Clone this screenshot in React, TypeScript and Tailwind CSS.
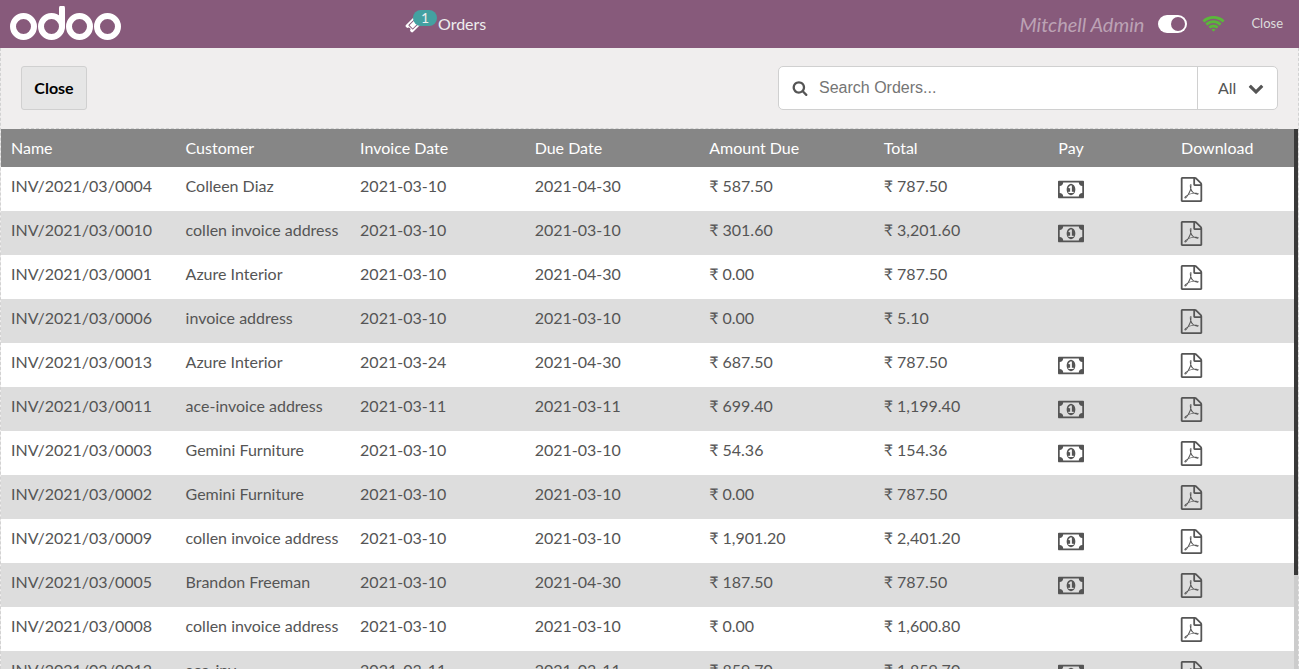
import React from "react";

type Invoice = {
  name: string;
  customer: string;
  date: string;
  due: string;
  amountDue: string;
  total: string;
  payable: boolean;
};

const inv = (
  name: string,
  customer: string,
  date: string,
  due: string,
  amountDue: string,
  total: string,
  payable: boolean,
): Invoice => ({ name, customer, date, due, amountDue, total, payable });

const invoices: Invoice[] = [
  inv("INV/2021/03/0004", "Colleen Diaz", "2021-03-10", "2021-04-30", "587.50", "787.50", true),
  inv("INV/2021/03/0010", "collen invoice address", "2021-03-10", "2021-03-10", "301.60", "3,201.60", true),
  inv("INV/2021/03/0001", "Azure Interior", "2021-03-10", "2021-04-30", "0.00", "787.50", false),
  inv("INV/2021/03/0006", "invoice address", "2021-03-10", "2021-03-10", "0.00", "5.10", false),
  inv("INV/2021/03/0013", "Azure Interior", "2021-03-24", "2021-04-30", "687.50", "787.50", true),
  inv("INV/2021/03/0011", "ace-invoice address", "2021-03-11", "2021-03-11", "699.40", "1,199.40", true),
  inv("INV/2021/03/0003", "Gemini Furniture", "2021-03-10", "2021-03-10", "54.36", "154.36", true),
  inv("INV/2021/03/0002", "Gemini Furniture", "2021-03-10", "2021-03-10", "0.00", "787.50", false),
  inv("INV/2021/03/0009", "collen invoice address", "2021-03-10", "2021-03-10", "1,901.20", "2,401.20", true),
  inv("INV/2021/03/0005", "Brandon Freeman", "2021-03-10", "2021-04-30", "187.50", "787.50", true),
  inv("INV/2021/03/0008", "collen invoice address", "2021-03-10", "2021-03-10", "0.00", "1,600.80", false),
  inv("INV/2021/03/0012", "ace-inv", "2021-03-11", "2021-03-11", "859.70", "1,859.70", true),
];

const glyphs = {
  money:
    "M768 1152h384v-96h-128v-448h-114l-148 137 77 80q42-37 55-57h2v288h-128v96zm512-256q0 70-21 142t-59.5 134-101.5 101-138 39-138-39-101.5-101-59.5-134-21-142 21-142 59.5-134 101.5-101 138-39 138 39 101.5 101 59.5 134 21 142zm512 256v-512q-106 0-181-75t-75-181h-1152q0 106-75 181t-181 75v512q106 0 181 75t75 181h1152q0-106 75-181t181-75zm128-832v1152q0 26-19 45t-45 19h-1792q-26 0-45-19t-19-45v-1152q0-26 19-45t45-19h1792q26 0 45 19t19 45z",
  pdf: "M1596 380q28 28 48 76t20 88v1152q0 40-28 68t-68 28h-1344q-40 0-68-28t-28-68v-1600q0-40 28-68t68-28h896q40 0 88 20t76 48zm-444-244v376h376q-10-29-22-41l-313-313q-12-12-41-22zm384 1528v-1024h-416q-40 0-68-28t-28-68v-416h-768v1536h1280zm-514-593q33 26 84 56 59-7 117-7 147 0 177 49 16 22 2 52 0 1-1 2l-2 2v1q-6 38-71 38-48 0-115-20t-130-53q-221 24-392 83-153 262-242 262-15 0-28-7l-24-12q-1-1-6-5-10-10-6-36 9-40 56-91.5t132-96.5q14-9 23 6 2 2 2 4 52-85 107-197 68-136 104-262-24-82-30.5-159.5t6.5-127.5q11-40 42-40h22q23 0 35 15 18 21 9 68-2 6-4 8 1 3 1 8v30q-2 123-14 192 55 164 146 238zm-576 411q52-24 137-158-51 40-87.5 84t-49.5 74zm398-920q-15 42-2 132 1-7 7-44 0-3 7-43 1-4 4-8-1-1-1-2-1-2-1-3-1-22-13-36 0 1-1 2v2zm-124 661q135-54 284-81-2-1-13-9.5t-16-13.5q-76-67-127-176-27 86-83 197-30 56-45 83zm646-16q-24-24-140-24 76 28 124 28 14 0 18-1 0-1-2-3z",
  search:
    "M1216 832q0-185-131.5-316.5t-316.5-131.5-316.5 131.5-131.5 316.5 131.5 316.5 316.5 131.5 316.5-131.5 131.5-316.5zm512 832q0 52-38 90t-90 38q-54 0-90-38l-343-342q-179 124-399 124-143 0-273.5-55.5t-225-150-150-225-55.5-273.5 55.5-273.5 150-225 225-150 273.5-55.5 273.5 55.5 225 150 150 225 55.5 273.5q0 220-124 399l343 343q37 37 37 90z",
  chevron:
    "M1683 808l-742 741q-19 19-45 19t-45-19l-742-741q-19-19-19-45.5t19-45.5l166-165q19-19 45-19t45 19l531 531 531-531q19-19 45-19t45 19l166 165q19 19 19 45.5t-19 45.5z",
  ticket:
    "M1024 452l316 316-572 572-316-316zm-211 979l618-618q19-19 19-45t-19-45l-362-362q-18-18-45-18t-45 18l-618 618q-19 19-19 45t19 45l362 362q18 18 45 18t45-18zm889-637l-907 908q-37 37-90.5 37t-90.5-37l-126-126q56-56 56-136t-56-136-136-56-136 56l-125-126q-37-37-37-90.5t37-90.5l907-906q37-37 90.5-37t90.5 37l125 125q-56 56-56 136t56 136 136 56 136-56l126 125q37 37 37 90.5t-37 90.5z",
  wifi: "M1120 1571q-20 0-93-73.5t-73-93.5q0-32 62.5-54t103.5-22 103.5 22 62.5 54q0 20-73 93.5t-93 73.5zm270-271q-2 0-40-25t-101.5-50-128.5-25-128.5 25-101 50-40.5 25q-18 0-93.5-75t-75.5-93q0-13 10-23 78-77 196-121t233-44 233 44 196 121q10 10 10 23 0 18-75.5 93t-93.5 75zm273-272q-11 0-23-8-136-105-252-154.5t-268-49.5q-85 0-170.5 22t-149 53-113.5 62-79 53-31 22q-17 0-92-75t-75-93q0-12 10-22 132-132 320-205t380-73 380 73 320 205q10 10 10 22 0 18-75 93t-92 75zm271-271q-11 0-22-9-179-157-371.5-236.5t-420.5-79.5-420.5 79.5-371.5 236.5q-11 9-22 9-17 0-92.5-75t-75.5-93q0-13 10-23 187-186 445-288t527-102 527 102 445 288q10 10 10 23 0 18-75.5 93t-92.5 75z",
};

const boxes: Record<keyof typeof glyphs, string> = {
  money: "0 0 1920 1792",
  pdf: "0 0 1792 1792",
  search: "0 0 1792 1792",
  chevron: "0 0 1792 1792",
  ticket: "0 0 1792 1792",
  wifi: "0 0 2240 1792",
};

function Glyph({ name, className }: { name: keyof typeof glyphs; className: string }) {
  return (
    <svg viewBox={boxes[name]} className={className} fill="currentColor" aria-hidden="true">
      <path d={glyphs[name]} />
    </svg>
  );
}

function Logo() {
  return (
    <svg viewBox="0 0 112 36" className="h-9 w-28" fill="none" stroke="#fff" strokeWidth="6" role="img" aria-label="odoo">
      <circle cx="13.5" cy="20.5" r="10.5" />
      <circle cx="41.5" cy="20.5" r="10.5" />
      <circle cx="69.5" cy="20.5" r="10.5" />
      <circle cx="97.5" cy="20.5" r="10.5" />
      <path d="M52 2.2v18.3" strokeLinecap="round" />
    </svg>
  );
}

const headings = ["Name", "Customer", "Invoice Date", "Due Date", "Amount Due", "Total"];

export default function App() {
  return (
    <div className="flex h-screen flex-col overflow-hidden bg-[#f0eeee] font-['Lato',sans-serif] text-base text-[#555]">
      <header className="flex h-12 shrink-0 items-center bg-[#875a7b] text-white">
        <div className="flex w-[405px] items-center pl-[10px]">
          <Logo />
        </div>
        <button className="relative flex items-center gap-[15px] text-[#eee]">
          <Glyph name="ticket" className="size-[18px] text-white" />
          <span className="absolute -top-0.5 left-2 flex h-4 w-6 items-center justify-center rounded-full bg-[#43a1a1] text-sm">
            1
          </span>
          Orders
        </button>
        <div className="ml-auto flex items-center pr-4">
          <span className="text-xl text-white/45 italic">Mitchell Admin</span>
          <label className="ml-[14px] flex h-[18px] w-[29px] cursor-pointer items-center justify-end rounded-full bg-white p-0.5">
            <input type="checkbox" defaultChecked aria-label="Customer display" className="size-[14px] appearance-none rounded-full bg-[#875a7b]" />
          </label>
          <Glyph name="wifi" className="ml-[14px] h-5 w-[25px] text-[#5bb73b]" />
          <button className="ml-[25px] text-[13px] text-[#ddd]">Close</button>
        </div>
      </header>

      <main className="flex min-h-0 flex-1 flex-col border-x border-dashed border-[#d2d2d2]">
        <div className="mx-5 flex h-[81px] shrink-0 items-center justify-between border-b border-dashed border-[#d2d2d2]">
          <button className="h-11 min-w-[66px] rounded-[3px] border border-[#d0d0d0] bg-[#e6e6e6] px-3 font-bold text-black">Close</button>
          <div className="flex h-11 w-[500px] rounded-[5px] border border-[#d0d0d0] bg-white">
            <label className="flex flex-1 items-center gap-[11px] pl-[13px]">
              <Glyph name="search" className="size-4" />
              <input
                type="text"
                aria-label="Search Orders"
                placeholder="Search Orders..."
                className="min-w-0 flex-1 font-['Liberation_Sans',sans-serif] outline-none placeholder:text-[#757575]"
              />
            </label>
            <button className="flex w-20 items-center gap-3 border-l border-[#d0d0d0] pl-5">
              All
              <Glyph name="chevron" className="size-4" />
            </button>
          </div>
        </div>

        <div className="flex min-h-0 flex-1">
          <div className="min-w-0 flex-1 overflow-hidden">
            <table className="w-full table-fixed border-collapse text-left">
              <thead className="bg-[#868686] text-white">
                <tr className="h-[38px]">
                  {headings.map((h) => (
                    <th key={h} className="w-[13.5%] px-[10px] font-normal">
                      {h}
                    </th>
                  ))}
                  <th className="w-[9.5%] px-[10px] font-normal">Pay</th>
                  <th className="px-[10px] font-normal">Download</th>
                </tr>
              </thead>
              <tbody>
                {invoices.map((row) => (
                  <tr key={row.name} className="h-11 bg-white align-top even:bg-[#ddd]">
                    {[row.name, row.customer, row.date, row.due, "₹ " + row.amountDue, "₹ " + row.total].map((cell, i) => (
                      <td key={i} className="px-[10px] pt-[7px] whitespace-nowrap">
                        {cell}
                      </td>
                    ))}
                    <td className="px-[10px] pt-[10px]">
                      {row.payable && (
                        <button aria-label="Pay" className="block">
                          <Glyph name="money" className="h-[25px] w-[26px]" />
                        </button>
                      )}
                    </td>
                    <td className="px-[10px] pt-[10px]">
                      <button aria-label="Download" className="block">
                        <Glyph name="pdf" className="-ml-0.5 size-[25px]" />
                      </button>
                    </td>
                  </tr>
                ))}
              </tbody>
            </table>
          </div>
          <div className="w-1 shrink-0 bg-[#ccc]">
            <div className="h-[446px] bg-[#393939]" />
          </div>
        </div>
      </main>
    </div>
  );
}
